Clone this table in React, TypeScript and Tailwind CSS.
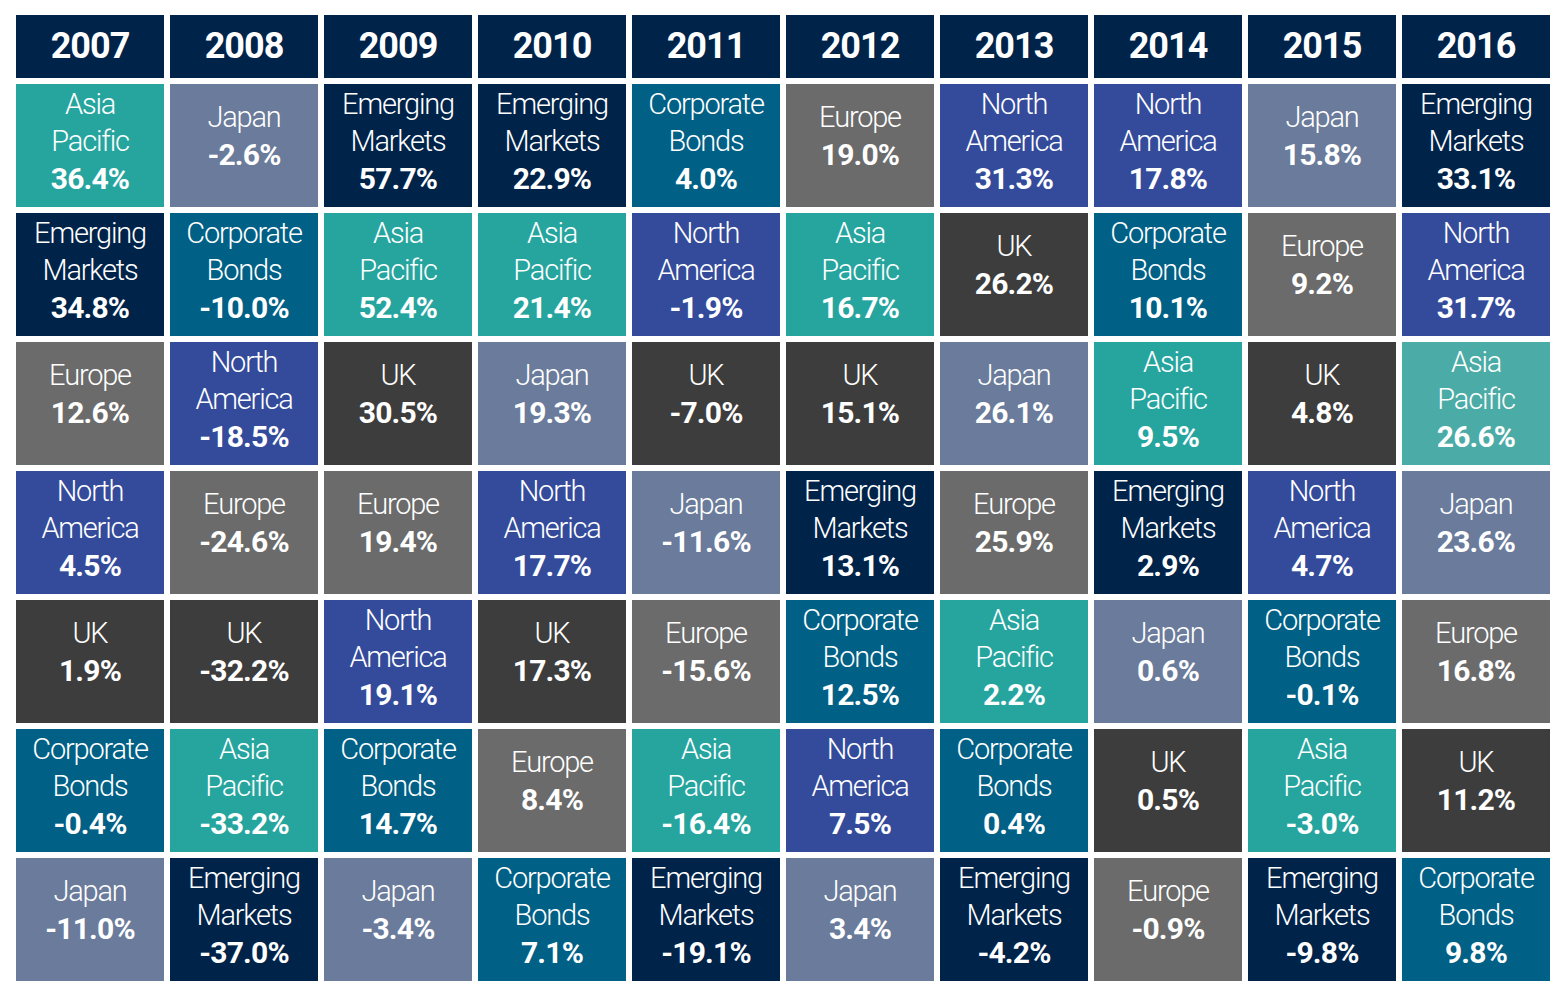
import React from 'react';

// asset class -> label lines + colour
const assets: Record<string, { lines: string[]; bg: string }> = {
  AP: { lines: ['Asia', 'Pacific'], bg: 'bg-[#26a59f]' },
  JP: { lines: ['Japan'], bg: 'bg-[#6a7b9b]' },
  EM: { lines: ['Emerging', 'Markets'], bg: 'bg-[#00234a]' },
  CB: { lines: ['Corporate', 'Bonds'], bg: 'bg-[#006085]' },
  EU: { lines: ['Europe'], bg: 'bg-[#6b6b6b]' },
  NA: { lines: ['North', 'America'], bg: 'bg-[#344b9b]' },
  UK: { lines: ['UK'], bg: 'bg-[#3d3d3d]' },
};

const years = ['2007', '2008', '2009', '2010', '2011', '2012', '2013', '2014', '2015', '2016'];

const rows: [string, string][][] = [
  [['AP', '36.4%'], ['JP', '-2.6%'], ['EM', '57.7%'], ['EM', '22.9%'], ['CB', '4.0%'], ['EU', '19.0%'], ['NA', '31.3%'], ['NA', '17.8%'], ['JP', '15.8%'], ['EM', '33.1%']],
  [['EM', '34.8%'], ['CB', '-10.0%'], ['AP', '52.4%'], ['AP', '21.4%'], ['NA', '-1.9%'], ['AP', '16.7%'], ['UK', '26.2%'], ['CB', '10.1%'], ['EU', '9.2%'], ['NA', '31.7%']],
  [['EU', '12.6%'], ['NA', '-18.5%'], ['UK', '30.5%'], ['JP', '19.3%'], ['UK', '-7.0%'], ['UK', '15.1%'], ['JP', '26.1%'], ['AP', '9.5%'], ['UK', '4.8%'], ['AP2', '26.6%']],
  [['NA', '4.5%'], ['EU', '-24.6%'], ['EU', '19.4%'], ['NA', '17.7%'], ['JP', '-11.6%'], ['EM', '13.1%'], ['EU', '25.9%'], ['EM', '2.9%'], ['NA', '4.7%'], ['JP', '23.6%']],
  [['UK', '1.9%'], ['UK', '-32.2%'], ['NA', '19.1%'], ['UK', '17.3%'], ['EU', '-15.6%'], ['CB', '12.5%'], ['AP', '2.2%'], ['JP', '0.6%'], ['CB', '-0.1%'], ['EU', '16.8%']],
  [['CB', '-0.4%'], ['AP', '-33.2%'], ['CB', '14.7%'], ['EU', '8.4%'], ['AP', '-16.4%'], ['NA', '7.5%'], ['CB', '0.4%'], ['UK', '0.5%'], ['AP', '-3.0%'], ['UK', '11.2%']],
  [['JP', '-11.0%'], ['EM', '-37.0%'], ['JP', '-3.4%'], ['CB', '7.1%'], ['EM', '-19.1%'], ['JP', '3.4%'], ['EM', '-4.2%'], ['EU', '-0.9%'], ['EM', '-9.8%'], ['CB', '9.8%']],
];

const Cell = ({ code, value }: { code: string; value: string }) => {
  const lightTeal = code === 'AP2';
  const asset = assets[lightTeal ? 'AP' : code];
  const twoLine = asset.lines.length === 2;
  return (
    <div
      className={`flex flex-col items-center justify-center text-white ${lightTeal ? 'bg-[#4baba6]' : asset.bg} ${twoLine ? 'pb-[8px]' : 'pb-[19px]'}`}
    >
      {asset.lines.map((l) => (
        <span key={l} className="text-[29px] font-light leading-[37px] tracking-[-1.2px]">
          {l}
        </span>
      ))}
      <span className="text-[30px] font-bold leading-[37px] tracking-[-0.8px]">{value}</span>
    </div>
  );
};

export default function App() {
  return (
    <div className="min-h-screen bg-white pt-[15px] pl-[16px] font-['Roboto',sans-serif]">
      <div className="grid grid-cols-[repeat(10,148px)] grid-rows-[63px_repeat(7,123px)] gap-[6px]">
        {years.map((y) => (
          <div key={y} className="flex items-center justify-center bg-[#00234a] pb-[2px]">
            <span className="text-[36px] font-bold tracking-[-1px] text-white">{y}</span>
          </div>
        ))}
        {rows.map((row, ri) =>
          row.map(([code, value], ci) => <Cell key={`${ri}-${ci}`} code={code} value={value} />)
        )}
      </div>
    </div>
  );
}
